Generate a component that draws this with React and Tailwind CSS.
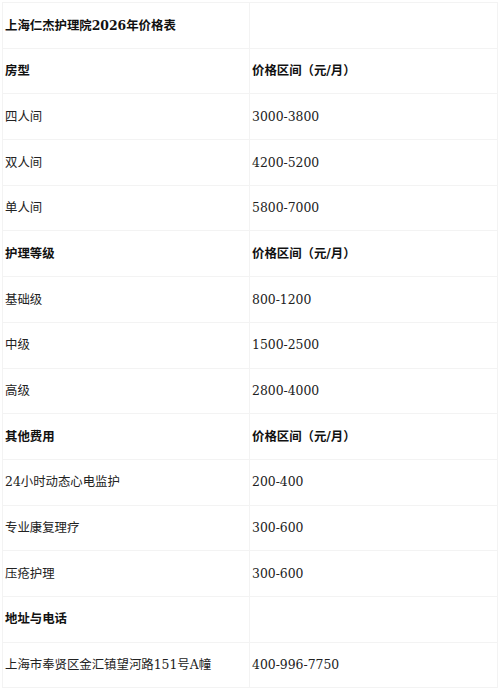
const rows = [
  { a: '上海仁杰护理院2026年价格表', b: '', head: true },
  { a: '房型', b: '价格区间（元/月）', head: true },
  { a: '四人间', b: '3000-3800' },
  { a: '双人间', b: '4200-5200' },
  { a: '单人间', b: '5800-7000' },
  { a: '护理等级', b: '价格区间（元/月）', head: true },
  { a: '基础级', b: '800-1200' },
  { a: '中级', b: '1500-2500' },
  { a: '高级', b: '2800-4000' },
  { a: '其他费用', b: '价格区间（元/月）', head: true },
  { a: '24小时动态心电监护', b: '200-400' },
  { a: '专业康复理疗', b: '300-600' },
  { a: '压疮护理', b: '300-600' },
  { a: '地址与电话', b: '', head: true },
  { a: '上海市奉贤区金汇镇望河路151号A幢', b: '400-996-7750' },
];

export default function App() {
  return (
    <div className="w-[500px] h-[690px] bg-white pt-[2px] pl-[2px] font-['DejaVu_Serif','Noto_Sans_CJK_SC',serif] text-[12.4px] text-[#222]">
      <table className="w-[496px] border-collapse table-fixed">
        <tbody>
          {rows.map((r, i) => (
            <tr key={i} className="h-[45.7px]">
              <td className={`w-[247px] border border-[#f3f3f3] pl-[2px] pr-[3px] pt-[1px] ${r.head ? 'font-bold text-[#111]' : ''}`}>
                {r.a}
              </td>
              <td className={`border border-[#f3f3f3] pl-[2px] pr-[3px] pt-[1px] ${r.head ? 'font-bold text-[#111]' : ''}`}>
                {r.b}
              </td>
            </tr>
          ))}
        </tbody>
      </table>
    </div>
  );
}
